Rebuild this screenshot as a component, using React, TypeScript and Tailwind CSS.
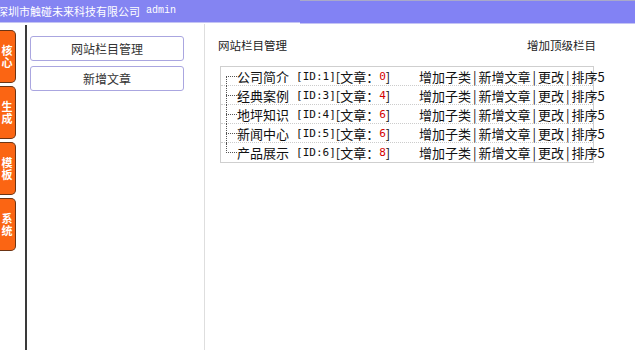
const tabs = ["核心", "生成", "模板", "系统"];

type Category = { name: string; id: number; count: number };

const categories: Category[] = [
  { name: "公司简介", id: 1, count: 0 },
  { name: "经典案例", id: 3, count: 4 },
  { name: "地坪知识", id: 4, count: 6 },
  { name: "新闻中心", id: 5, count: 6 },
  { name: "产品展示", id: 6, count: 8 },
];

const actions = ["增加子类", "新增文章", "更改", "排序5"];

const cjk = "font-['Noto_Sans_CJK_SC','Noto_Sans',sans-serif]";

export default function App() {
  return (
    <div className={`w-[635px] h-[350px] overflow-hidden bg-white text-[#222] ${cjk}`}>
      {/* top bar */}
      <div className="flex h-[24px]">
        <div className="w-[300px] h-[23px] bg-[#8484f2] border-b border-[#c4c4f4] flex items-center overflow-hidden">
          <span className="ml-[-3px] whitespace-nowrap text-[11px] leading-none text-white">
            深圳市触碰未来科技有限公司
          </span>
          <span className="ml-[6px] font-['Liberation_Mono',monospace] text-[10px] leading-none text-white">admin</span>
        </div>
        <div className="flex-1 h-[24px] border-t border-[#a9a9c9] bg-[#8282f4] border-b border-b-[#c4c4f4]" />
      </div>

      <div className="flex h-[326px]">
        {/* side tabs */}
        <div className="w-[25px] pt-[6px] flex flex-col gap-[3px]">
          {tabs.map((t) => (
            <div
              key={t}
              className="w-[17px] h-[53px] ml-[-1px] rounded-r-[5px] bg-[#fb6513] border border-l-0 border-[#6b3414] flex items-center justify-center"
            >
              <span className="[writing-mode:vertical-rl] text-[11px] leading-[16px] tracking-[1px] font-bold text-white">
                {t}
              </span>
            </div>
          ))}
        </div>
        <div className="w-[2px] bg-[#3a3a3a] mt-[1px]" />

        {/* left menu */}
        <div className="w-[178px] border-r border-[#dedede] pl-[3px] pt-[12px] flex flex-col gap-[5px]">
          {["网站栏目管理", "新增文章"].map((b) => (
            <div
              key={b}
              className="w-[154px] h-[25px] rounded-[3px] border border-[#aaa6e0] flex items-center justify-center text-[12px] text-[#333]"
            >
              {b}
            </div>
          ))}
        </div>

        {/* main */}
        <div className="flex-1 pl-[13px] pt-[14px]">
          <div className="w-[378px] flex items-center justify-between h-[16px] text-[11.5px] text-[#222]">
            <span>网站栏目管理</span>
            <span>增加顶级栏目</span>
          </div>
          <div className="mt-[12px] ml-[2px] w-[374px] border border-[#cfcfcf]">
            {categories.map((c, i) => (
              <div
                key={c.id}
                className={`relative flex items-center h-[19px] text-[13px] leading-none whitespace-nowrap ${
                  i < categories.length - 1 ? "border-b border-dotted border-[#cccccc]" : ""
                }`}
              >
                {/* tree lines */}
                <span
                  className={`absolute left-[5px] w-0 border-l border-dotted border-[#555] ${
                    i === 0 ? "top-[9px] bottom-[-1px]" : i === categories.length - 1 ? "top-0 h-[10px]" : "top-0 bottom-[-1px]"
                  }`}
                />
                <span className="absolute left-[5px] top-[9px] w-[11px] border-t border-dotted border-[#555]" />
                <div className="w-[198px] shrink-0 pl-[16px] flex items-center text-[#111]">
                  <span>{c.name}</span>
                  <span className="ml-[7px] font-['DejaVu_Sans_Mono',monospace] text-[11px]">[ID:{c.id}]</span>
                  <span>[文章：</span>
                  <span className="font-['DejaVu_Sans_Mono',monospace] text-[11px] text-[#d40000]">{c.count}</span>
                  <span>]</span>
                </div>
                <div className="shrink-0 flex items-center text-[#111]">
                  {actions.map((a, j) => (
                    <span key={a} className="flex items-center">
                      {j > 0 && <span className="mx-[2px]">|</span>}
                      {a}
                    </span>
                  ))}
                </div>
              </div>
            ))}
          </div>
        </div>
      </div>
    </div>
  );
}
